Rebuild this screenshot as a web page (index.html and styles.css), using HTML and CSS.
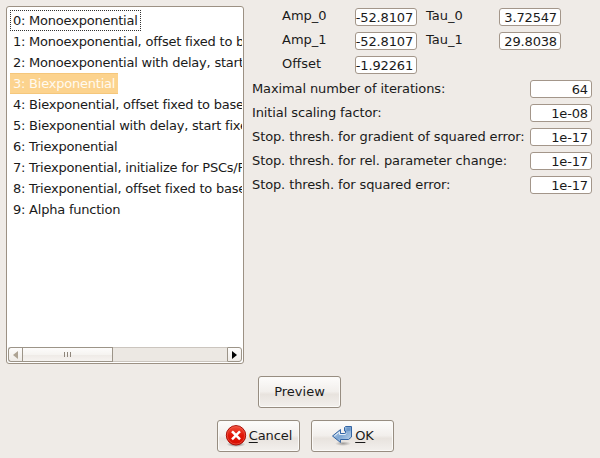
FILE: index.html
```html
<!DOCTYPE html>
<html lang="en">
<head>
<meta charset="utf-8">
<title>Fit settings</title>
<link rel="stylesheet" href="styles.css">
</head>
<body>
<main class="dialog">
  <div class="top">
    <section class="listbox">
      <ul class="items">
        <li><span class="focused">0: Monoexponential</span></li>
        <li><span>1: Monoexponential, offset fixed to baseline</span></li>
        <li><span>2: Monoexponential with delay, start fixed to baseline</span></li>
        <li><span class="selected">3: Biexponential</span></li>
        <li><span>4: Biexponential, offset fixed to baseline</span></li>
        <li><span>5: Biexponential with delay, start fixed to baseline</span></li>
        <li><span>6: Triexponential</span></li>
        <li><span>7: Triexponential, initialize for PSCs/PSPs</span></li>
        <li><span>8: Triexponential, offset fixed to baseline</span></li>
        <li><span>9: Alpha function</span></li>
      </ul>
      <div class="scrollbar">
        <div class="step left"><svg width="5" height="8" viewBox="0 0 5 8"><path d="M5 0V8L0 4Z" fill="#aea393"/></svg></div>
        <div class="thumb"><i></i><i></i><i></i></div>
        <div class="track"></div>
        <div class="step right"><svg width="5" height="8" viewBox="0 0 5 8"><path d="M0 0V8L5 4Z" fill="#000"/></svg></div>
      </div>
    </section>
    <section class="settings">
      <div class="params">
        <span>Amp_0</span><div class="field">-52.8107</div><span>Tau_0</span><div class="field">3.72547</div>
        <span>Amp_1</span><div class="field">-52.8107</div><span>Tau_1</span><div class="field">29.8038</div>
        <span>Offset</span><div class="field">-1.92261</div>
      </div>
      <div class="options">
        <span>Maximal number of iterations:</span><div class="field">64</div>
        <span>Initial scaling factor:</span><div class="field">1e-08</div>
        <span>Stop. thresh. for gradient of squared error:</span><div class="field">1e-17</div>
        <span>Stop. thresh. for rel. parameter change:</span><div class="field">1e-17</div>
        <span>Stop. thresh. for squared error:</span><div class="field">1e-17</div>
      </div>
    </section>
  </div>
  <div class="preview-row"><div class="button">Preview</div></div>
  <div class="action-row">
    <div class="button cancel">
      <svg width="22" height="22" viewBox="0 0 22 22">
        <defs>
          <linearGradient id="red" x1="0" y1="0" x2="0" y2="1"><stop offset="0" stop-color="#f2503c"/><stop offset=".5" stop-color="#e11708"/><stop offset="1" stop-color="#d80c00"/></linearGradient>
          <radialGradient id="shade"><stop offset="0" stop-color="#000" stop-opacity=".55"/><stop offset="1" stop-color="#000" stop-opacity="0"/></radialGradient>
        </defs>
        <ellipse cx="11" cy="19.3" rx="9.5" ry="2.7" fill="url(#shade)"/>
        <circle cx="11" cy="10.3" r="9.7" fill="url(#red)" stroke="#a90c05"/>
        <circle cx="11" cy="10.3" r="8.7" fill="none" stroke="#f36a58" stroke-opacity=".55"/>
        <path d="M7.9 7.2L14.1 13.4M14.1 7.2L7.9 13.4" stroke="#fff" stroke-width="2.5" stroke-linecap="square"/>
      </svg>
      <span><u>C</u>ancel</span>
    </div>
    <div class="button ok">
      <svg width="22" height="22" viewBox="0 0 22 22">
        <defs>
          <linearGradient id="blue" x1="0" y1="0" x2="1" y2="1"><stop offset="0" stop-color="#d2e2f2"/><stop offset=".5" stop-color="#7fa7d3"/><stop offset="1" stop-color="#c6daee"/></linearGradient>
        </defs>
        <ellipse cx="12" cy="18.6" rx="8" ry="2.4" fill="url(#shade)" opacity=".6"/>
        <path d="M13.5 2.5L14.5 1.5H20.5V12L17.5 14.5H9.5V17.5L1.5 11L9.5 4.5V8.5H13.8L14.5 7.5V6H13.5Z" fill="url(#blue)" stroke="#3465a4" stroke-linejoin="round"/>
        <path d="M3.3 11L8.5 7V9.5H14.3L15.5 8.4" fill="none" stroke="#e4eef8"/>
        <path d="M15.5 2.5H19.5V6H15.5Z" fill="#6f98c8"/>
      </svg>
      <span><u>O</u>K</span>
    </div>
  </div>
</main>
</body>
</html>
```
FILE: styles.css
```css
* { box-sizing: border-box; }

body {
  margin: 0;
  background: #efebe7;
  color: #1a1a1a;
  font: 13px/18px "DejaVu Sans", sans-serif;
}

.dialog {
  width: 600px;
  height: 458px;
  padding: 6px;
  overflow: hidden;
}

.top { display: flex; gap: 8px; }

.listbox {
  display: flex;
  flex-direction: column;
  width: 238px;
  height: 358px;
  padding: 1px;
  border: 1px solid #9c9184;
  border-radius: 3px;
  background: #fff;
}

.items {
  flex: 1;
  margin: 0;
  padding: 2px 0 0 2px;
  list-style: none;
  overflow: hidden;
  white-space: nowrap;
  letter-spacing: -0.22px;
}

.items li { height: 21px; }

.items span {
  display: inline-block;
  height: 21px;
  padding: 1px 2px;
  border: 1px solid transparent;
  line-height: 18px;
}

.items .focused { width: 131px; border: 1px dotted #333; }

.items .selected {
  width: 108px;
  border: 0;
  border-top: 1px solid #f5c77c;
  border-bottom: 1px solid #f5c77c;
  padding: 1px 3px;
  background: #fcd38e;
  color: #fffaf0;
}

.scrollbar { display: flex; height: 15px; }

.step {
  display: flex;
  align-items: center;
  justify-content: center;
  width: 15px;
  border: 1px solid #9c9488;
  background: linear-gradient(#fdfcfb, #efebe7);
}

.left { width: 14px; border-right: 0; border-radius: 3px 0 0 3px; }
.right { border-radius: 0 3px 3px 0; }

.thumb {
  display: flex;
  align-items: center;
  justify-content: center;
  gap: 2px;
  width: 91px;
  border: 1px solid #9c9488;
  background: linear-gradient(#fdfcfb, #f6f4f1 50%, #efebe7 55%, #f6f3f0);
}

.thumb i { width: 1px; height: 5px; background: #8f867b; }

.track {
  flex: 1;
  border: solid #cbc5be;
  border-width: 1px 0;
  background: #ece8e3;
}

.settings { width: 340px; padding-top: 2px; }

.params, .options {
  display: grid;
  grid-auto-rows: 18px;
  row-gap: 6px;
}

.params {
  grid-template-columns: 73px 62px 82px 62px;
  padding-left: 30px;
}

.params span:nth-of-type(even) { padding-left: 9px; }
.params span { line-height: 16px; }

.options { grid-template-columns: 278px 62px; margin-top: 6px; }

.options span {
  line-height: 18px;
  white-space: nowrap;
  letter-spacing: -0.11px;
}

.field {
  display: flex;
  justify-content: flex-end;
  height: 18px;
  padding-right: 3px;
  border: 1px solid #a3968a;
  border-radius: 3px;
  background: #fff;
  line-height: 18px;
  letter-spacing: -0.15px;
  white-space: nowrap;
}

.preview-row { display: flex; padding: 12px 0 0 252px; }
.action-row { display: flex; gap: 11px; padding: 12px 0 0 211px; }

.button {
  display: flex;
  align-items: center;
  justify-content: center;
  width: 83px;
  height: 32px;
  border: 1px solid #978d81;
  border-radius: 3px;
  background: linear-gradient(#fdfcfb, #f2efec 48%, #e8e3de 58%, #f3f0ed);
  box-shadow: inset 0 0 0 1px #fbfaf8;
}

.button svg { flex: none; margin-right: 2px; }
.button span { letter-spacing: -0.1px; }

u { text-decoration-thickness: 1px; text-underline-offset: 2px; }
```
